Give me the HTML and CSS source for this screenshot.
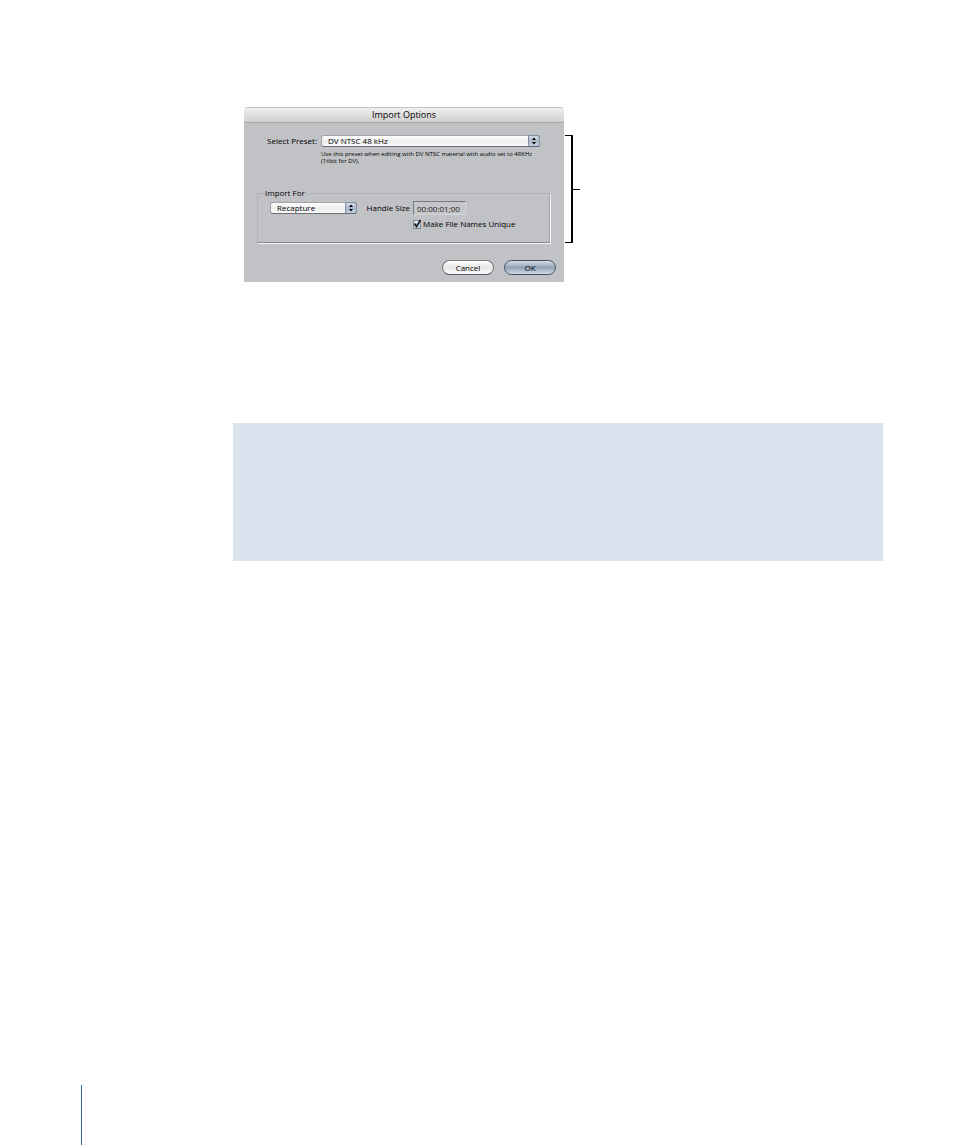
FILE: index.html
```html
<!DOCTYPE html>
<html lang="en">
<head>
<meta charset="utf-8">
<title>Import Options</title>
<link rel="stylesheet" href="styles.css">
</head>
<body>
<main class="page">
  <div class="figure">
    <form class="dialog">
      <h1 class="titlebar">Import Options</h1>
      <div class="content">
        <div class="preset-row">
          <label class="preset-label" for="preset">Select Preset:</label>
          <span class="popup">
            <select id="preset"><option>DV NTSC 48 kHz</option></select>
            <svg class="arrows" viewBox="0 0 10 10" aria-hidden="true"><path d="M5 1.500 7 4H3zM5 8.500 3 6h4z"/></svg>
          </span>
          <p class="hint">Use this preset when editing with DV NTSC material with audio set to 48KHz (16bit for DV).</p>
        </div>
        <fieldset class="group">
          <legend>Import For</legend>
          <div class="group-grid">
            <span class="popup">
              <select aria-label="Import For"><option>Recapture</option></select>
              <svg class="arrows" viewBox="0 0 10 10" aria-hidden="true"><path d="M5 1.500 7 4H3zM5 8.500 3 6h4z"/></svg>
            </span>
            <label class="handle-label" for="handle">Handle Size</label>
            <input class="timecode" id="handle" type="text" value="00:00:01;00">
            <div class="check">
              <span class="box">
                <input id="unique" type="checkbox" checked>
                <svg class="tick" viewBox="0 0 10 10" aria-hidden="true"><path d="M2.500 4.500 4.500 7.500 8.500 1"/></svg>
              </span>
              <label for="unique">Make File Names Unique</label>
            </div>
          </div>
        </fieldset>
        <div class="buttons">
          <button class="button" type="button">Cancel</button>
          <button class="button default" type="button">OK</button>
        </div>
      </div>
    </form>
    <div class="callout"><span class="bracket"></span><span class="pointer"></span></div>
  </div>
  <aside class="note"></aside>
  <footer class="footer"><span class="rule"></span></footer>
</main>
</body>
</html>
```
FILE: styles.css
```css
* { box-sizing: border-box; }
body { margin: 0; background: #fff; }
.page {
  display: flex;
  flex-direction: column;
  min-height: 100vh;
  padding-top: 107px;
}
.figure {
  display: flex;
  align-items: flex-start;
  margin-left: 244px;
}
.dialog {
  width: 320px;
  margin: 0;
  background: #c0c2c5;
  border-radius: 4px 4px 0 0;
  overflow: hidden;
  font: 8px/12px "Open Sans", "Noto Sans", sans-serif;
  color: #000;
}
.titlebar {
  height: 16px;
  margin: 0;
  border-top: 1px solid #c4c4c4;
  border-bottom: 1px solid #a6a6a6;
  background: linear-gradient(#f0f0f0, #cfcfcf);
  font-size: 9px;
  line-height: 14px;
  font-weight: 400;
  text-align: center;
}
.content { padding: 12px 8px 7px 13px; }
.preset-row {
  display: grid;
  grid-template-columns: 60px minmax(0, 1fr);
  column-gap: 4px;
  padding-right: 16px;
}
.preset-label { text-align: right; white-space: nowrap; }
.popup { position: relative; display: block; height: 12px; }
.popup select {
  display: block;
  appearance: none;
  width: 100%;
  height: 12px;
  margin: 0;
  padding: 0 14px 0 6px;
  border: 1px solid #a0a2a5;
  border-bottom-color: #6c6e71;
  border-radius: 3px;
  background: linear-gradient(#fff, #ededed 50%, #fafafa);
  font: inherit;
  line-height: 10px;
  color: #000;
}
.arrows {
  position: absolute;
  top: 0;
  right: 0;
  width: 12px;
  height: 12px;
  border: 1px solid #8290a4;
  border-bottom-color: #5d6878;
  border-radius: 0 3px 3px 0;
  background: linear-gradient(#d3dce8, #a9b7ca 50%, #c6d3e3);
  fill: #000;
  pointer-events: none;
}
.hint {
  grid-column: 2;
  margin: 4px 0 0;
  font-size: 6px;
  line-height: 7px;
}
.group {
  min-width: 0;
  margin: 22px 6px 0 0;
  padding: 2px 0 13px 12px;
  border: 1px solid #b0b2b5;
  border-right-color: #a4a6a9;
  border-bottom-color: #85878a;
  box-shadow: 1px 1px #f4f4f4;
}
.group legend { margin-left: -6px; padding: 0 1px; }
.group-grid {
  display: grid;
  grid-template-columns: 87px 46px 52px;
  grid-template-rows: 14px 15px;
  column-gap: 7px;
  align-items: center;
  margin-bottom: -1px;
}
.handle-label { white-space: nowrap; text-align: right; }
.timecode {
  width: 53px;
  height: 14px;
  margin-left: -4px;
  padding: 0 3px;
  border: 1px solid #d6d7d9;
  border-top-color: #77797c;
  border-left-color: #77797c;
  background: #c4c6c9;
  font: inherit;
  color: #222;
}
.check {
  grid-column: 3;
  display: flex;
  align-items: center;
  align-self: end;
  gap: 2px;
  margin-left: -4px;
  white-space: nowrap;
}
.box { position: relative; width: 8px; height: 9px; }
.box input {
  display: block;
  appearance: none;
  width: 8px;
  height: 9px;
  margin: 0;
  border: 1px solid #7c8796;
  background: linear-gradient(#e8edf3, #b5c2d2);
}
.tick {
  position: absolute;
  top: -1px;
  left: -1px;
  width: 10px;
  height: 10px;
  fill: none;
  stroke: #111;
  stroke-width: 1.5;
  pointer-events: none;
}
.buttons {
  display: flex;
  justify-content: flex-end;
  gap: 10px;
  margin-top: 17px;
}
.button {
  width: 52px;
  height: 15px;
  padding: 0;
  border: 1px solid #77797c;
  border-bottom-color: #55575a;
  border-radius: 8px;
  background: linear-gradient(#fff, #e6e6e6 50%, #fcfcfc);
  font: inherit;
  color: #000;
}
.button.default {
  border-color: #45505f;
  background: linear-gradient(#d3dce6, #93a3b6 50%, #ccdbe8);
}
.callout {
  display: flex;
  align-items: center;
  height: 108px;
  margin: 28px 0 0 1px;
}
.bracket {
  align-self: stretch;
  width: 8px;
  border: solid #000;
  border-width: 1px 2px 1px 0;
}
.pointer { width: 7px; height: 1px; background: #000; }
.note {
  min-height: 138px;
  margin: 141px 71px 0 233px;
  background: #d9e3ed;
}
.footer { display: flex; margin-top: auto; padding-left: 81px; }
.rule { width: 1px; height: 60px; background: #36699a; }
```
